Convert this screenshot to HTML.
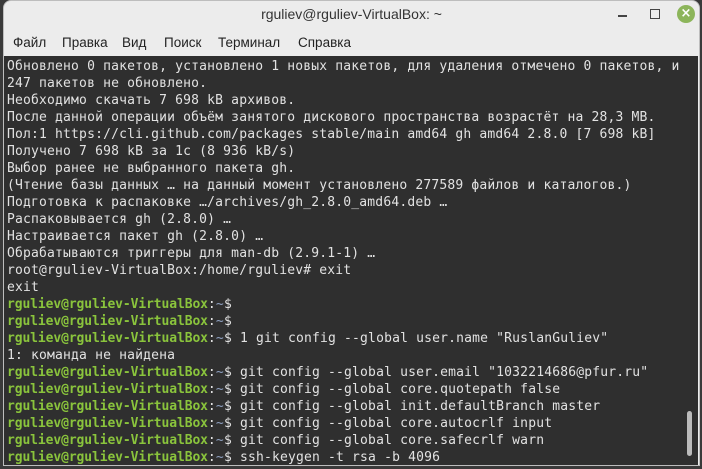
<!DOCTYPE html>
<html><head><meta charset="utf-8">
<style>
html,body{margin:0;padding:0;width:702px;height:469px;overflow:hidden;background:#3a3a3a;}
.win{position:absolute;left:3px;top:0;width:697px;height:466px;background:#ececec;border-radius:8px 8px 0 0;overflow:hidden;border:1px solid #bdbdbd;box-sizing:border-box;}
.title{position:absolute;left:0;right:0;top:0;height:30px;text-align:center;font:14px "Liberation Sans","DejaVu Sans",sans-serif;color:#333;line-height:26px;}
.min{position:absolute;left:614px;top:14px;width:9px;height:1.5px;background:#444;}
.max{position:absolute;left:646px;top:8px;width:8px;height:8px;border:1.3px solid #444;}
.close{position:absolute;left:673px;top:4px;width:18px;height:18px;border-radius:50%;background:#8cb55a;color:#fff;font:bold 13px "DejaVu Sans",sans-serif;text-align:center;line-height:18px;}
.menu span{position:absolute;top:34px;font:13.5px "Liberation Sans","DejaVu Sans",sans-serif;color:#222;}
.term{position:absolute;left:0;top:55px;width:694px;height:412px;background:#2f2f2f;}
pre{margin:0;position:absolute;left:3px;top:2px;font:13px/17px "DejaVu Sans Mono",monospace;color:#e2e2e2;letter-spacing:0.18px;}
.g{color:#8ac43c;font-weight:bold;letter-spacing:-0.1px;}
.b{color:#8ea0c0;}
.sb{position:absolute;left:683px;top:355px;width:5px;height:45px;background:#bbb;border-radius:3px;}
</style></head><body>
<div class="win">
<div class="title">rguliev@rguliev-VirtualBox: ~</div>
<div class="min"></div><div class="max"></div><div class="close">×</div>
<div class="menu"><span style="left:9px">Файл</span><span style="left:58px">Правка</span><span style="left:118px">Вид</span><span style="left:160px">Поиск</span><span style="left:214px">Терминал</span><span style="left:294px">Справка</span></div>
<div class="term">
<pre>Обновлено 0 пакетов, установлено 1 новых пакетов, для удаления отмечено 0 пакетов, и
247 пакетов не обновлено.
Необходимо скачать 7 698 kB архивов.
После данной операции объём занятого дискового пространства возрастёт на 28,3 MB.
Пол:1 https://cli.github.com/packages stable/main amd64 gh amd64 2.8.0 [7 698 kB]
Получено 7 698 kB за 1с (8 936 kB/s)
Выбор ранее не выбранного пакета gh.
(Чтение базы данных … на данный момент установлено 277589 файлов и каталогов.)
Подготовка к распаковке …/archives/gh_2.8.0_amd64.deb …
Распаковывается gh (2.8.0) …
Настраивается пакет gh (2.8.0) …
Обрабатываются триггеры для man-db (2.9.1-1) …
root@rguliev-VirtualBox:/home/rguliev# exit
exit
<span class="g">rguliev@rguliev-VirtualBox</span>:<span class="b">~</span>$
<span class="g">rguliev@rguliev-VirtualBox</span>:<span class="b">~</span>$
<span class="g">rguliev@rguliev-VirtualBox</span>:<span class="b">~</span>$ 1 git config --global user.name "RuslanGuliev"
1: команда не найдена
<span class="g">rguliev@rguliev-VirtualBox</span>:<span class="b">~</span>$ git config --global user.email "1032214686@pfur.ru"
<span class="g">rguliev@rguliev-VirtualBox</span>:<span class="b">~</span>$ git config --global core.quotepath false
<span class="g">rguliev@rguliev-VirtualBox</span>:<span class="b">~</span>$ git config --global init.defaultBranch master
<span class="g">rguliev@rguliev-VirtualBox</span>:<span class="b">~</span>$ git config --global core.autocrlf input
<span class="g">rguliev@rguliev-VirtualBox</span>:<span class="b">~</span>$ git config --global core.safecrlf warn
<span class="g">rguliev@rguliev-VirtualBox</span>:<span class="b">~</span>$ ssh-keygen -t rsa -b 4096</pre>
<div class="sb"></div>
</div>
</div>
</body></html>
